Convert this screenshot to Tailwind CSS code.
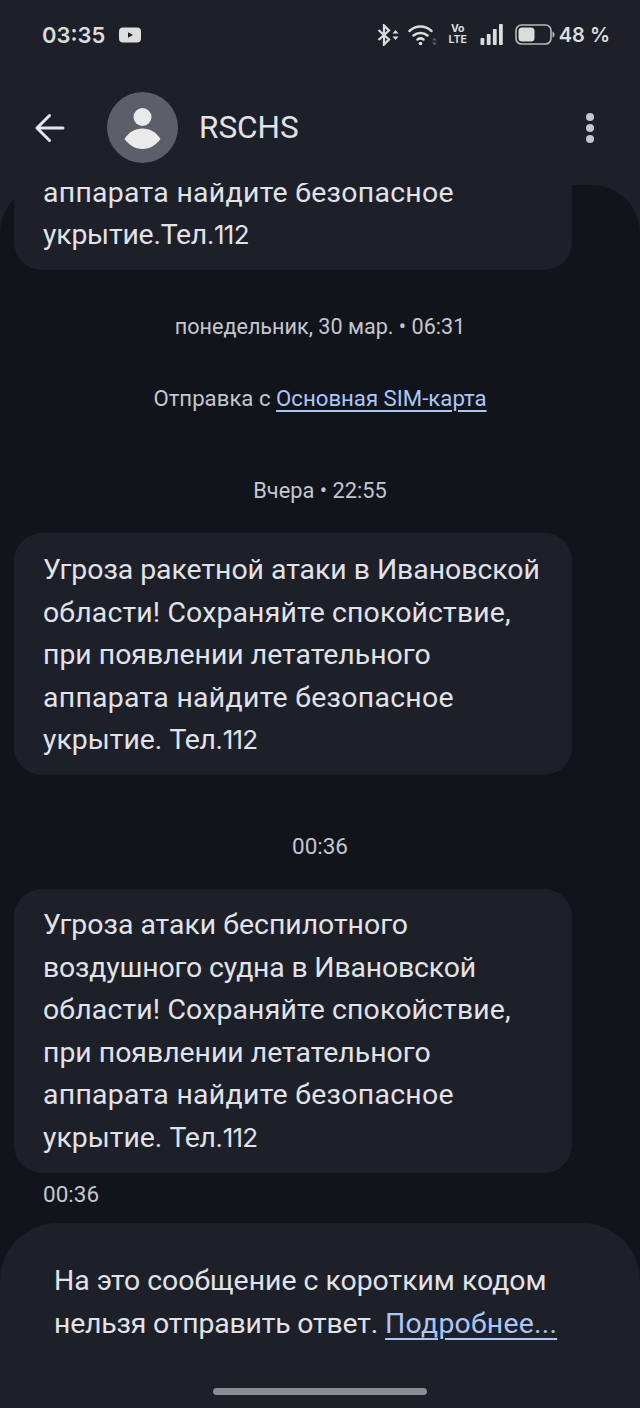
<!DOCTYPE html>
<html lang="ru">
<head>
<meta charset="utf-8">
<script src="https://cdn.jsdelivr.net/npm/@tailwindcss/browser@4"></script>
</head>
<body class="m-0">
<div class="w-[640px] h-[1408px] bg-[#1d2029] flex flex-col overflow-hidden font-['Roboto','Noto_Sans',sans-serif] text-[#e2e2e9]">
  <!-- status bar -->
  <div class="h-[70px] shrink-0 flex items-center justify-between pl-[42px] pr-[30px] pb-[1px]">
    <div class="flex items-center gap-[14px]">
      <span class="font-['Inter',sans-serif] font-semibold text-[22px] text-[#dcdcdc] leading-none">03:35</span>
      <svg width="22" height="16" viewBox="0 0 22 16"><rect x="0" y="0.5" width="22" height="15" rx="4" fill="#dedede"/><path d="M9 5.200v5.600L14 8z" fill="#1d2029"/></svg>
    </div>
    <div class="flex items-center">
      <svg width="22" height="22" viewBox="0 0 22 22" fill="none" stroke="#dcdcdc" stroke-width="2.300"><path d="M1.500 6L12 15.500 7 20.500V1.500l5 5L1.500 16"/><path d="M15.500 9.500L18.500 6l3 3.500zM15.500 12.500l3 3.500 3-3.500z" fill="#dcdcdc" stroke="none"/></svg>
      <svg class="ml-[9px]" width="30" height="22" viewBox="0 0 30 22" fill="none" stroke="#dcdcdc" stroke-width="2.500" stroke-linecap="round"><path d="M1.500 7C8 1 17 1 23.500 7"/><path d="M5.500 11.500C9.500 8 15.500 8 19.500 11.500"/><path d="M9.500 15.500c2-1.500 4-1.500 6 0"/><circle cx="12.500" cy="19.500" r="1.800" fill="#dcdcdc" stroke="none"/><path d="M26.500 13.500l2.500 3h-5zM26.500 21.500l2.500-3h-5z" fill="#55585f" stroke="none"/></svg>
      <div class="ml-[10px] w-[20px] flex flex-col items-center font-['Inter',sans-serif] font-bold text-[#dcdcdc] text-[10.5px] leading-[10.5px]"><span>Vo</span><span>LTE</span></div>
      <svg class="ml-[12px]" width="23" height="22" viewBox="0 0 23 22" fill="#dcdcdc"><rect x="0.500" y="14" width="3.800" height="7" rx="0.800"/><rect x="6.800" y="10" width="3.800" height="11" rx="0.800"/><rect x="12.900" y="5" width="3.800" height="16" rx="0.800"/><rect x="19" y="0" width="3.800" height="21" rx="0.800"/></svg>
      <svg class="ml-[12px]" width="40" height="21" viewBox="0 0 40 21" fill="none"><rect x="1" y="1" width="35" height="19" rx="5.500" stroke="#b9b9bb" stroke-width="1.600"/><rect x="3.500" y="3.500" width="16" height="14" rx="3.500" fill="#dcdcdc"/><path d="M37.500 7.500c1.500.5 2 1.500 2 3s-.5 2.500-2 3z" fill="#b9b9bb"/></svg>
      <span class="ml-[4px] font-['Inter',sans-serif] font-semibold text-[20px] text-[#dcdcdc] leading-none">48 %</span>
    </div>
  </div>
  <!-- app bar -->
  <div class="h-[113px] shrink-0 flex items-start pt-[22px]">
    <svg class="ml-[35px] mt-[21px]" width="30" height="30" viewBox="0 0 30 30" fill="none" stroke="#e6e6ee" stroke-width="3" stroke-linecap="round" stroke-linejoin="round"><path d="M28 15H2.500M14.500 2.500L2 15l12.500 12.500"/></svg>
    <div class="ml-[42px] w-[71px] h-[71px] rounded-full bg-[#5c5f69]">
      <svg width="71" height="71" viewBox="0 0 71 71" fill="#eaeaea"><circle cx="35.500" cy="25" r="9"/><path d="M17.500 47C22 40 28 36.500 35.500 36.500S49 40 53.500 47C49 53 43 57 35.500 57S22 53 17.500 47Z"/></svg>
    </div>
    <span class="ml-[21px] text-[31.500px] leading-[71px] text-[#e2e2e9]">RSCHS</span>
    <div class="ml-auto mr-[46px] mt-[21px] flex flex-col gap-[3px]">
      <span class="block w-[8px] h-[8px] rounded-full bg-[#c4c6d2]"></span>
      <span class="block w-[8px] h-[8px] rounded-full bg-[#c4c6d2]"></span>
      <span class="block w-[8px] h-[8px] rounded-full bg-[#c4c6d2]"></span>
    </div>
  </div>
  <!-- conversation -->
  <div class="h-[1225px] shrink-0 flex flex-col overflow-hidden">
    <div class="mt-[2px] flex-1 bg-[#12141c] rounded-t-[48px] flex flex-col">
      <div class="-mt-[2px] ml-[14px] w-[558px] h-[87px] shrink-0 bg-[#1d2029] rounded-b-[28px] pl-[29px] pb-[14px] text-[28.400px] leading-[42.500px] overflow-hidden flex flex-col justify-end">
        <p class="whitespace-nowrap shrink-0 tracking-[0.3px] translate-y-[1px]">аппарата найдите безопасное</p>
        <p class="whitespace-nowrap shrink-0 tracking-[-0.2px]">укрытие.<span class="tracking-[-0.3px]">Тел.</span><span class="font-['Inter',sans-serif] text-[26px] tracking-[-0.8px]">112</span></p>
      </div>
      <p class="mt-[45px] text-center text-[21.600px] leading-[24px] text-[#c4c6d0]">понедельник, 30 мар. • 06:31</p>
      <p class="mt-[47px] text-center text-[22.200px] leading-[24px] text-[#c4c6d0]">Отправка с <span class="text-[#abc7f8] underline underline-offset-[4px]">Основная SIM-карта</span></p>
      <p class="mt-[69px] text-center text-[21.800px] leading-[24px] text-[#c4c6d0]">Вчера • 22:55</p>
      <div class="mt-[30px] ml-[14px] w-[558px] shrink-0 bg-[#1d2029] rounded-[28px] pl-[29px] pt-[16.250px] pb-[13.250px] text-[28.400px] leading-[42.500px]">
        <p class="whitespace-nowrap">
          <span class="tracking-[-0.03px]">Угроза ракетной атаки в Ивановской</span><br>
          <span class="tracking-[0.16px]">области! Сохраняйте спокойствие,</span><br>
          при появлении летательного<br>
          <span class="tracking-[0.3px]">аппарата найдите безопасное</span><br>
          укрытие. <span class="tracking-[-0.3px]">Тел.</span><span class="font-['Inter',sans-serif] text-[26px] tracking-[-0.8px]">112</span>
        </p>
      </div>
      <p class="mt-[59px] text-center text-[22.500px] leading-[24px] text-[#c4c6d0]">00:36</p>
      <div class="mt-[31px] ml-[14px] w-[558px] shrink-0 bg-[#1d2029] rounded-[28px] pl-[29px] pt-[15px] pb-[14px] text-[28.400px] leading-[42.500px]">
        <p class="whitespace-nowrap">
          Угроза атаки беспилотного<br>
          <span class="tracking-[-0.17px]">воздушного судна в Ивановской</span><br>
          <span class="tracking-[0.16px]">области! Сохраняйте спокойствие,</span><br>
          при появлении летательного<br>
          <span class="tracking-[0.3px]">аппарата найдите безопасное</span><br>
          укрытие. <span class="tracking-[-0.3px]">Тел.</span><span class="font-['Inter',sans-serif] text-[26px] tracking-[-0.8px]">112</span>
        </p>
      </div>
      <p class="mt-[9px] pl-[43px] text-[22.500px] leading-[24px] text-[#c4c6d0]">00:36</p>
      <!-- bottom panel -->
      <div class="mt-auto h-[185px] shrink-0 bg-[#1d2029] rounded-t-[58px] flex flex-col">
        <p class="pt-[36px] pl-[54px] text-[28.400px] leading-[43px] whitespace-nowrap">На это сообщение с коротким кодом<br><span class="tracking-[-0.18px]">нельзя отправить ответ.</span> <span class="text-[#abc7f8] tracking-[0.25px] underline decoration-2 underline-offset-[5px]">Подробнее...</span></p>
        <div class="mt-auto mb-[13px] mx-auto w-[214px] h-[7px] rounded-full bg-[#8c8d92]"></div>
      </div>
    </div>
  </div>
</div>
</body>
</html>
